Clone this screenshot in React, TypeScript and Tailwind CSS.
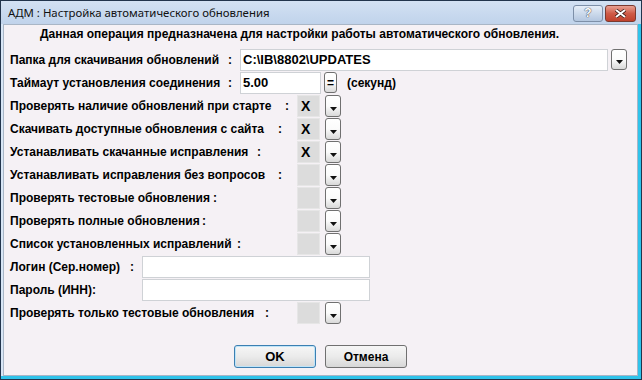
import React from 'react';

const font = { fontFamily: '"Liberation Sans", Arial, sans-serif' };

const DropBtn = ({ tall }: { tall?: boolean }) => (
  <div
    className={`flex items-end justify-center pb-[5px] w-[16px] ${tall ? 'h-[21px]' : 'h-[22px]'} rounded-[3px] border border-[#707070] bg-gradient-to-b from-white via-[#fbfbfb] to-[#d9d9d9]`}
  >
    <svg width="7" height="4" viewBox="0 0 7 4">
      <path d="M0 0H7L3.5 4Z" fill="#111" />
    </svg>
  </div>
);

const CheckBox = ({ on }: { on?: boolean }) => (
  <div className="w-[23px] h-[22px] bg-[#dcdcdc] border border-[#e6e6e6] flex items-center pl-[3px] text-[14px] font-bold text-black leading-none">
    {on ? 'X' : ''}
  </div>
);

const checkRows = [
  { label: 'Проверять наличие обновлений при старте', lw: 'w-[275px]', on: true },
  { label: 'Скачивать доступные обновления с сайта', lw: 'w-[268px]', on: true },
  { label: 'Устанавливать скачанные исправления', lw: 'w-[247px]', on: true },
  { label: 'Устанавливать исправления без вопросов', lw: 'w-[268px]', on: false },
  { label: 'Проверять тестовые обновления', lw: 'w-[203px]', on: false },
  { label: 'Проверять полные обновления', lw: 'w-[192px]', on: false },
  { label: 'Список установленных исправлений', lw: 'w-[227px]', on: false },
];

const Label = ({ text, lw, block }: { text: string; lw?: string; block: string }) => (
  <div className={`${block} shrink-0 flex items-center whitespace-nowrap`}>
    {lw ? (
      <>
        <span className={`${lw} shrink-0`}>{text}</span>
        <span>:</span>
      </>
    ) : (
      <span>{text}</span>
    )}
  </div>
);

const Row = ({ children }: { children: React.ReactNode }) => (
  <div className="flex items-center h-[23px] pl-[6px]">{children}</div>
);

export default function App() {
  return (
    <div
      className="w-[642px] h-[380px] border border-[#22344c] bg-[#d2e1f3] flex flex-col overflow-hidden"
      style={font}
    >
      {/* title bar */}
      <div className="h-[23px] shrink-0 flex items-center justify-between bg-gradient-to-b from-[#d3e1f3] to-[#c0d3eb] pl-[7px] pr-[5px]">
        <span
          className="text-[11.4px] text-[#111] leading-none"
          style={{ fontFamily: '"Noto Sans", "Open Sans", sans-serif' }}
        >
          АДМ : Настройка автоматического обновления
        </span>
        <div className="flex gap-[2px] mt-[1px]">
          <div className="w-[30px] h-[17px] rounded-[3px] border border-[#7d8fa8] bg-gradient-to-b from-[#e6eef8] to-[#b3c6df] flex items-center justify-center text-white font-bold text-[12px] leading-none [text-shadow:0_0_1px_#334,0_0_1px_#334]">
            ?
          </div>
          <div className="w-[31px] h-[17px] rounded-[3px] border border-[#7a3a30] bg-gradient-to-b from-[#e8a093] via-[#cf5b47] to-[#c0412c] flex items-center justify-center">
            <svg width="11" height="9" viewBox="0 0 11 9">
              <path d="M1 1L10 8M10 1L1 8" stroke="#3a1a15" strokeWidth="3.4" />
              <path d="M1 1L10 8M10 1L1 8" stroke="#fff" strokeWidth="2" />
            </svg>
          </div>
        </div>
      </div>

      <div className="flex flex-1 min-h-0">
        <div className="w-[2px] bg-[#d8e6f6]" />
        {/* client */}
        <div className="flex-1 border border-[#a9b6c6] bg-[#f5f1f5] text-[12px] font-bold text-black flex flex-col">
          <div className="h-[23px] pl-[36px] pt-[1px] leading-[16px] whitespace-nowrap">
            Данная операция предназначена для настройки работы автоматического обновления.
          </div>

          <Row>
            <Label text="Папка для скачивания обновлений" lw="w-[218px]" block="w-[230px]" />
            <div className="w-[368px] h-[22px] bg-white border border-[#cfd2d6] flex items-center pl-[2px] text-[13px]">
              C:\IB\8802\UPDATES
            </div>
            <div className="ml-[3px]">
              <DropBtn tall />
            </div>
          </Row>

          <Row>
            <Label text="Таймаут установления соединения" lw="w-[218px]" block="w-[230px]" />
            <div className="w-[81px] h-[22px] bg-white border border-[#cfd2d6] flex items-center pl-[2px] text-[13px]">
              5.00
            </div>
            <div className="ml-[3px] w-[13px] h-[21px] rounded-[3px] border border-[#707070] bg-gradient-to-b from-white via-[#fbfbfb] to-[#d9d9d9] flex items-center justify-center text-[12px] leading-none">
              =
            </div>
            <span className="ml-[10px]">(секунд)</span>
          </Row>

          {checkRows.map((r) => (
            <Row key={r.label}>
              <Label text={r.label} lw={r.lw} block="w-[287px]" />
              <CheckBox on={r.on} />
              <div className="ml-[5px]">
                <DropBtn />
              </div>
            </Row>
          ))}

          <Row>
            <Label text="Логин (Сер.номер)" lw="w-[120px]" block="w-[132px]" />
            <div className="w-[228px] h-[22px] bg-white border border-[#cfd2d6]" />
          </Row>
          <Row>
            <Label text="Пароль (ИНН):" block="w-[132px]" />
            <div className="w-[228px] h-[22px] bg-white border border-[#cfd2d6]" />
          </Row>
          <Row>
            <Label text="Проверять только тестовые обновления" lw="w-[255px]" block="w-[287px]" />
            <CheckBox />
            <div className="ml-[5px]">
              <DropBtn />
            </div>
          </Row>

          <div className="flex justify-center gap-[9px] mt-[21px]">
            <button className="w-[82px] h-[23px] rounded-[3px] border border-[#3c7fb1] bg-gradient-to-b from-[#f6f6f6] via-[#ebebeb] to-[#d7d7d7] shadow-[inset_0_0_0_1px_#bfe4f8] text-[13px] font-bold">
              OK
            </button>
            <button className="w-[82px] h-[23px] rounded-[3px] border border-[#707070] bg-gradient-to-b from-[#f6f6f6] via-[#ebebeb] to-[#d7d7d7] text-[12px] font-bold">
              Отмена
            </button>
          </div>
        </div>
        <div className="w-[3px] bg-[#2fc3ea]" />
      </div>
      <div className="h-[3px] shrink-0 bg-[#2fc3ea]" />
    </div>
  );
}
